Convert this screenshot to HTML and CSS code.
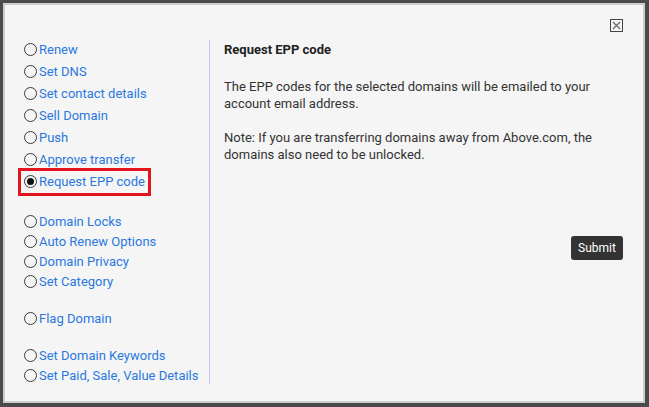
FILE: index.html
```html
<!DOCTYPE html>
<html lang="en">
<head>
  <meta charset="UTF-8" />
  <meta name="viewport" content="width=device-width, initial-scale=1.0"/>
  <title>Domain Actions</title>
  <link rel="stylesheet" href="styles.css">
</head>
<body>

  <div class="dialog">
    <div class="dialog-head">
      <button class="close-btn" aria-label="Close">
        <svg width="9" height="9" viewBox="0 0 9 9"><path d="M1 1L8 8M8 1L1 8" stroke="#666" stroke-width="1.2"/></svg>
      </button>
    </div>

    <div class="dialog-body">
      <div class="actions">
        <div class="group wide">
          <label class="opt"><span class="radio"></span><a>Renew</a></label>
          <label class="opt"><span class="radio"></span><a>Set DNS</a></label>
          <label class="opt"><span class="radio"></span><a>Set contact details</a></label>
          <label class="opt"><span class="radio"></span><a>Sell Domain</a></label>
          <label class="opt"><span class="radio"></span><a>Push</a></label>
          <label class="opt"><span class="radio"></span><a>Approve transfer</a></label>
          <label class="opt selected"><span class="radio checked"></span><a>Request EPP code</a></label>
        </div>
        <div class="group">
          <label class="opt"><span class="radio"></span><a>Domain Locks</a></label>
          <label class="opt"><span class="radio"></span><a>Auto Renew Options</a></label>
          <label class="opt"><span class="radio"></span><a>Domain Privacy</a></label>
          <label class="opt"><span class="radio"></span><a>Set Category</a></label>
        </div>
        <div class="group">
          <label class="opt"><span class="radio"></span><a>Flag Domain</a></label>
        </div>
        <div class="group">
          <label class="opt"><span class="radio"></span><a>Set Domain Keywords</a></label>
          <label class="opt"><span class="radio"></span><a>Set Paid, Sale, Value Details</a></label>
        </div>
      </div>

      <div class="panel">
        <h2>Request EPP code</h2>
        <p>The EPP codes for the selected domains will be emailed to your account email address.</p>
        <p>Note: If you are transferring domains away from Above.com, the domains also need to be unlocked.</p>
        <div class="panel-foot">
          <button class="submit-btn">Submit</button>
        </div>
      </div>
    </div>
  </div>

</body>
</html>
```

FILE: styles.css
```css
html, body {
  margin: 0;
  height: 100%;
}
body {
  background-color: #4a4a4a;
  padding: 3px 4px 4px 3px;
  box-sizing: border-box;
  font-family: Roboto, Arial, sans-serif;
  font-size: 13px;
  color: #333;
}
.dialog {
  height: 100%;
  box-sizing: border-box;
  background: #f5f5f5;
  border: 2px solid #cdcdcd;
}
.dialog-head {
  display: flex;
  justify-content: flex-end;
  padding: 14px 20px 0 0;
  height: 13px;
}
.close-btn {
  width: 13px;
  height: 13px;
  padding: 0;
  border: 1px solid #444;
  background: transparent;
  display: flex;
  align-items: center;
  justify-content: center;
}
.dialog-body {
  display: flex;
  margin-top: 8px;
  padding-left: 19px;
}
.actions {
  width: 185px;
  border-right: 1px solid #c4c9f2;
  padding-top: 2px;
}
.group {
  display: flex;
  flex-direction: column;
  align-items: flex-start;
  gap: 4px;
  margin-top: 21px;
}
.group.wide {
  gap: 6px;
  margin-top: 0;
  margin-bottom: 24px;
}
.opt {
  display: flex;
  align-items: center;
  line-height: 16px;
}
.opt a {
  color: #2a78e0;
  margin-left: 2px;
}
.radio {
  width: 11px;
  height: 11px;
  border: 1px solid #3a3a3a;
  border-radius: 50%;
  background: #f5f5f5;
  position: relative;
  top: -1px;
}
.radio.checked::after {
  content: "";
  position: absolute;
  left: 2px;
  top: 2px;
  width: 7px;
  height: 7px;
  border-radius: 50%;
  background: #111;
}
.opt.selected {
  outline: 3px solid #e3141e;
  outline-offset: 3px;
}
.panel {
  flex: 1;
  padding: 0 20px 0 14px;
}
.panel h2 {
  font-size: 13px;
  font-weight: bold;
  line-height: 22px;
  margin: -1px 0 17px;
  color: #222;
}
.panel p {
  margin: 0 0 17px;
  line-height: 17px;
  max-width: 380px;
}
.panel-foot {
  display: flex;
  justify-content: flex-end;
  margin-top: 73px;
}
.submit-btn {
  background: #333;
  color: #fff;
  border: none;
  border-radius: 3px;
  font-family: Roboto, Arial, sans-serif;
  font-size: 12px;
  height: 24px;
  width: 52px;
  padding: 0;
}
```
